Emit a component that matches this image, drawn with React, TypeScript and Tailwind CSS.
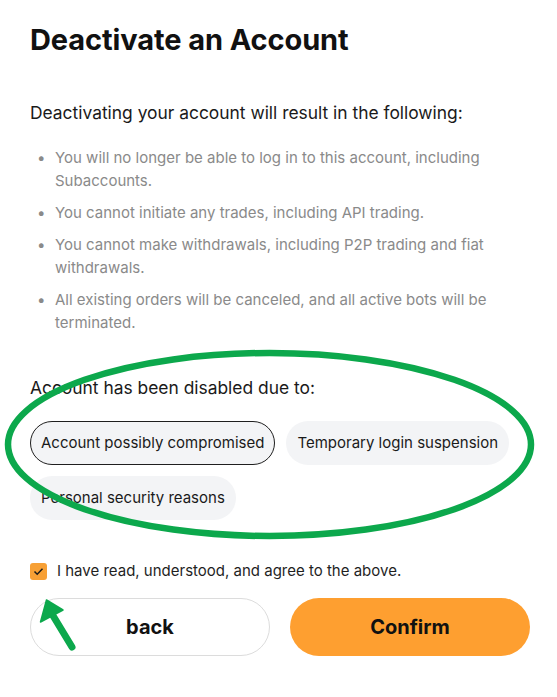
import React from "react";

export default function App() {
  const bullets = [
    "You will no longer be able to log in to this account, including Subaccounts.",
    "You cannot initiate any trades, including API trading.",
    "You cannot make withdrawals, including P2P trading and fiat withdrawals.",
    "All existing orders will be canceled, and all active bots will be terminated.",
  ];
  return (
    <div
      className="relative w-[557px] h-[697px] bg-white overflow-hidden"
      style={{ fontFamily: "Inter, 'Noto Sans', sans-serif" }}
    >
      <div className="px-[30px] pt-[22px]">
        <h1 className="text-[29px] leading-[36px] font-bold text-[#111111] tracking-[-0.1px]">
          Deactivate an Account
        </h1>
        <p className="mt-[43px] text-[17.4px] leading-[24px] text-[#1a1a1a]">
          Deactivating your account will result in the following:
        </p>
        <ul className="mt-[21px] flex flex-col gap-[9px]">
          {bullets.map((b) => (
            <li key={b} className="flex text-[15px] leading-[23px] text-[#8a8a8a]">
              <span className="w-[25px] shrink-0 pl-[7px]">•</span>
              <span>{b}</span>
            </li>
          ))}
        </ul>
        <p className="mt-[42px] text-[17.4px] leading-[24px] text-[#1a1a1a]">
          Account has been disabled due to:
        </p>
        <div className="mt-[21px] flex flex-wrap gap-x-[11px] gap-y-[11px]">
          <div className="h-[44px] px-[10px] flex items-center rounded-full bg-[#f3f4f6] border border-[#1f1f1f] text-[15px] text-[#1a1a1a]">
            Account possibly compromised
          </div>
          <div className="h-[44px] px-[11px] flex items-center rounded-full bg-[#f3f4f6] text-[15px] text-[#1a1a1a]">
            Temporary login suspension
          </div>
          <div className="h-[44px] px-[11px] flex items-center rounded-full bg-[#f3f4f6] text-[15px] text-[#1a1a1a]">
            Personal security reasons
          </div>
        </div>
        <div className="mt-[40px] flex items-center gap-[10px]">
          <div className="w-[17px] h-[17px] rounded-[3px] bg-[#f7a035] flex items-center justify-center">
            <svg width="11" height="9" viewBox="0 0 11 9">
              <path d="M1.5 4.5 L4.2 7.2 L9.5 1.8" stroke="#1a1a1a" strokeWidth="1.5" fill="none" />
            </svg>
          </div>
          <span className="text-[15px] text-[#1f1f1f]">I have read, understood, and agree to the above.</span>
        </div>
        <div className="mt-[15px] flex gap-[20px] w-[500px]">
          <button className="w-[240px] shrink-0 h-[58px] rounded-full border border-[#dcdcdc] bg-white text-[20px] font-bold text-[#111111]">
            back
          </button>
          <button className="w-[240px] shrink-0 h-[58px] rounded-full bg-[#fe9f30] text-[20px] font-bold text-[#111111]">
            Confirm
          </button>
        </div>
      </div>
      <svg className="absolute left-0 top-0 pointer-events-none" width="557" height="697">
        <ellipse cx="269.5" cy="444.5" rx="261.5" ry="91.5" fill="none" stroke="#0ca84c" strokeWidth="6.5" />
        <line x1="52" y1="614" x2="72" y2="647" stroke="#0ca84c" strokeWidth="7" strokeLinecap="round" />
        <polygon points="46.5,600 40.5,622 63,610" fill="#0ca84c" stroke="#0ca84c" strokeWidth="1.5" strokeLinejoin="round" />
      </svg>
    </div>
  );
}
